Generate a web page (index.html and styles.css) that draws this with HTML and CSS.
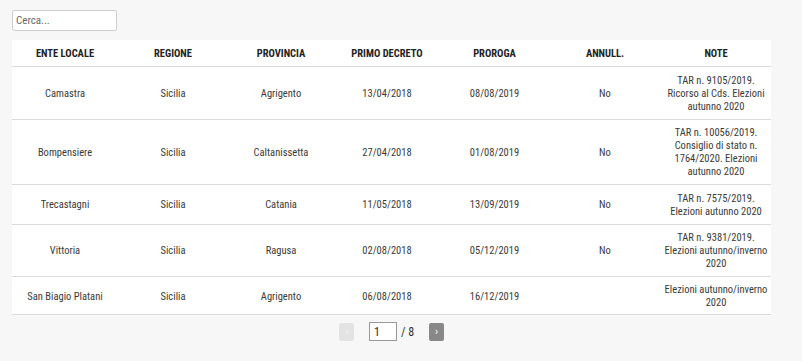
FILE: index.html
```html
<!DOCTYPE html>
<html lang="it">
<head>
<meta charset="utf-8">
<link rel="stylesheet" href="styles.css">
</head>
<body>
<div class="page">
  <input class="search" type="text" placeholder="Cerca...">
  <table class="data">
    <colgroup>
      <col class="c1"><col class="c2"><col class="c3"><col class="c4"><col class="c5"><col class="c6"><col class="c7">
    </colgroup>
    <thead>
      <tr><th>ENTE LOCALE</th><th>REGIONE</th><th>PROVINCIA</th><th>PRIMO DECRETO</th><th>PROROGA</th><th>ANNULL.</th><th>NOTE</th></tr>
    </thead>
    <tbody>
      <tr><td>Camastra</td><td>Sicilia</td><td>Agrigento</td><td>13/04/2018</td><td>08/08/2019</td><td>No</td><td>TAR n. 9105/2019. Ricorso al Cds. Elezioni autunno 2020</td></tr>
      <tr><td>Bompensiere</td><td>Sicilia</td><td>Caltanissetta</td><td>27/04/2018</td><td>01/08/2019</td><td>No</td><td>TAR n. 10056/2019. Consiglio di stato n. 1764/2020. Elezioni autunno 2020</td></tr>
      <tr><td>Trecastagni</td><td>Sicilia</td><td>Catania</td><td>11/05/2018</td><td>13/09/2019</td><td>No</td><td>TAR n. 7575/2019. Elezioni autunno 2020</td></tr>
      <tr><td>Vittoria</td><td>Sicilia</td><td>Ragusa</td><td>02/08/2018</td><td>05/12/2019</td><td>No</td><td>TAR n. 9381/2019. Elezioni autunno/inverno 2020</td></tr>
      <tr class="last"><td>San Biagio Platani</td><td>Sicilia</td><td>Agrigento</td><td>06/08/2018</td><td>16/12/2019</td><td></td><td>Elezioni autunno/inverno 2020</td></tr>
    </tbody>
  </table>
  <div class="pager">
    <button class="pbtn prev" type="button">&lsaquo;</button>
    <input class="pnum" type="text" value="1">
    <span class="ptot">/ 8</span>
    <button class="pbtn next" type="button">&rsaquo;</button>
  </div>
</div>
</body>
</html>
```
FILE: styles.css
```css
html, body {
  margin: 0;
  padding: 0;
  background: #f7f7f7;
}
body {
  font-family: "Roboto Condensed", "Roboto", sans-serif;
  font-size: 10.5px;
  color: #3a3a3a;
}
.page {
  padding: 10px 31px 0 12px;
}
.search {
  display: block;
  box-sizing: border-box;
  width: 105px;
  height: 21px;
  margin: 0 0 9px 0;
  padding: 0 3px;
  border: 1px solid #cfcfcf;
  border-radius: 2px;
  background: #fff;
  font-family: inherit;
  font-size: 11px;
  color: #333;
}
.search::placeholder { color: #666; }
.data {
  width: 759px;
  table-layout: fixed;
  border-collapse: collapse;
  background: #fff;
}
.c1 { width: 106px; }
.c2 { width: 110px; }
.c3 { width: 106px; }
.c4 { width: 106px; }
.c5 { width: 109px; }
.c6 { width: 112px; }
.c7 { width: 110px; }
.data th {
  font-weight: bold;
  color: #222;
  text-align: center;
  padding: 7px 3px 6px;
  border-bottom: 1px solid #dcdcdc;
  line-height: 13px;
}
.data td {
  text-align: center;
  padding: 6.5px 3px 6px;
  line-height: 13px;
  border-bottom: 1px solid #dcdcdc;
  vertical-align: middle;
}
.data .last td {
  padding: 6px 3px 5px;
}
.pager {
  display: flex;
  align-items: center;
  justify-content: center;
  padding-top: 7px;
  width: 759px;
}
.pbtn {
  width: 15px;
  height: 18px;
  padding: 0;
  border: none;
  border-radius: 2px;
  font-family: inherit;
  font-size: 11px;
  line-height: 18px;
  color: #fff;
}
.prev { background: #e3e3e3; color: #f4f4f4; margin-right: 15px; }
.next { background: #888; margin-left: 15px; }
.pnum {
  box-sizing: border-box;
  width: 28px;
  height: 19px;
  padding: 0 4px;
  border: 1px solid #999;
  background: #fff;
  font-family: inherit;
  font-size: 12px;
  color: #333;
}
.ptot {
  margin-left: 4px;
  font-size: 12px;
  color: #333;
}
```
